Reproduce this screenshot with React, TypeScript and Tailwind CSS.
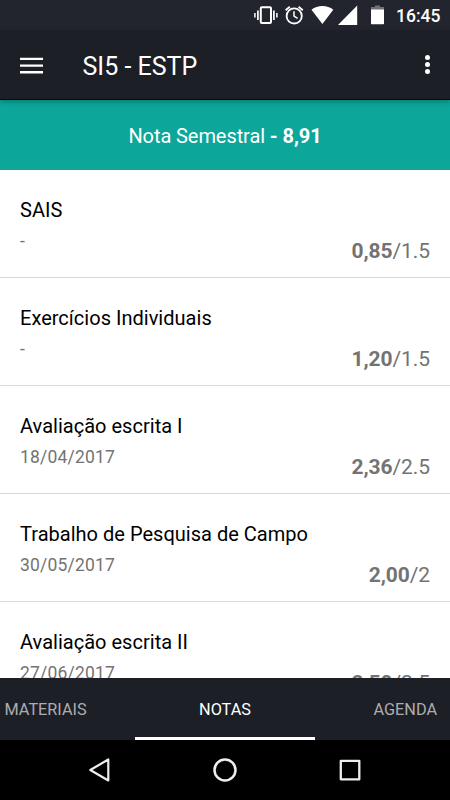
import { useState } from 'react'

interface Grade {
  title: string
  date: string
  score: string
  max: string
}

const grades: Grade[] = [
  { title: 'SAIS', date: '-', score: '0,85', max: '1.5' },
  { title: 'Exercícios Individuais', date: '-', score: '1,20', max: '1.5' },
  { title: 'Avaliação escrita I', date: '18/04/2017', score: '2,36', max: '2.5' },
  { title: 'Trabalho de Pesquisa de Campo', date: '30/05/2017', score: '2,00', max: '2' },
  { title: 'Avaliação escrita II', date: '27/06/2017', score: '2,50', max: '2.5' },
]

const tabs = [
  { label: 'MATERIAIS', className: 'justify-start pl-[4.5px]' },
  { label: 'NOTAS', className: 'justify-center' },
  { label: 'AGENDA', className: 'justify-end pr-[13px]' },
]

const StatusBar = () => (
  <div className="flex h-[30px] shrink-0 items-center bg-[#22252d] pl-[253px] text-white">
    <svg className="h-[20px] w-[25px]" viewBox="0 0 25 20" fill="none" stroke="currentColor">
      <rect x="7.8" y="2.2" width="10.2" height="15.8" rx="1" strokeWidth="2" />
      <path d="M4.9 5.5v9.5M20.9 5.5v9.5" strokeWidth="1.7" />
      <path d="M1.9 8v4.5M23.9 8v4.5" strokeWidth="1.5" />
    </svg>
    <svg className="ml-[6px] h-[20px] w-[20px]" viewBox="0 0 20 20" fill="none" stroke="currentColor">
      <circle cx="10.2" cy="10.9" r="7.6" strokeWidth="1.8" />
      <path d="M10 6.3v4.9l3.6 2.2" strokeWidth="1.5" />
      <path d="M1.6 5.3l4.2-3.6M18.8 5.3l-4.2-3.6" strokeWidth="1.8" />
    </svg>
    <svg className="ml-[7px] h-[20px] w-[23px]" viewBox="0 0 23 20" fill="currentColor">
      <path d="M.5 4.7C3.5 2.3 7.3 1 11.4 1s7.9 1.3 10.9 3.7L11.4 19z" />
    </svg>
    <svg className="ml-[4px] h-[20px] w-[20px]" viewBox="0 0 20 20" fill="currentColor">
      <path d="M0 20L19.2.6V20z" />
    </svg>
    <svg className="ml-[13px] h-[20px] w-[13px]" viewBox="0 0 13 20" fill="currentColor">
      <path d="M4 .5h5V2h4v3H0V2h4z" fillOpacity=".35" />
      <path d="M0 4.5h13v14a.7.7 0 0 1-.7.7H.7a.7.7 0 0 1-.7-.7z" />
    </svg>
    <span className="ml-[12px] pt-[1px] text-[17.5px] font-medium leading-[30px]">16:45</span>
  </div>
)

const AppBar = () => (
  <header className="relative z-10 flex h-[70px] shrink-0 items-center justify-between border-b border-[#08080c] bg-[#1c1f26] px-[20px] text-white shadow-[0_2px_5px_rgba(0,0,0,0.25)]">
    <div className="flex items-center">
      <button type="button" aria-label="Menu">
        <svg className="h-[18px] w-[23px]" viewBox="0 0 23 18" stroke="currentColor" strokeWidth="2.4">
          <path d="M0 2.9h23M0 9.6h23M0 16.3h23" />
        </svg>
      </button>
      <h1 className="ml-[39.5px] pt-[4px] text-[25px] leading-8">SI5 - ESTP</h1>
    </div>
    <button type="button" aria-label="Mais" className="flex flex-col gap-[2px]">
      <span className="size-[5px] rounded-full bg-white" />
      <span className="size-[5px] rounded-full bg-white" />
      <span className="size-[5px] rounded-full bg-white" />
    </button>
  </header>
)

const GradeRow = ({ grade }: { grade: Grade }) => (
  <li className="flex h-[108px] shrink-0 justify-between border-b border-[#d9d9d9] px-[20px] pb-[14px] pt-[28px]">
    <div className="flex flex-col gap-[7px]">
      <span className="text-[20px] leading-6 tracking-[0.02px] text-black">{grade.title}</span>
      <span className="text-[17.5px] leading-6 tracking-[0.2px] text-[#737373]">{grade.date}</span>
    </div>
    <span className="self-end text-[21px] leading-6 tracking-[-0.08px] text-[#737373]">
      <b>{grade.score}</b>
      /
      {grade.max}
    </span>
  </li>
)

const NavBar = () => (
  <div className="flex h-[60px] shrink-0 items-center justify-center gap-[101px] bg-black text-[#eee]">
    <svg className="size-[24px]" viewBox="0 0 24 24" fill="none" stroke="currentColor" strokeWidth="2.2" strokeLinejoin="round">
      <path d="M20.3 1.5v21L2.3 12z" />
    </svg>
    <svg className="size-[24px]" viewBox="0 0 24 24" fill="none" stroke="currentColor" strokeWidth="2.5">
      <circle cx="12" cy="12" r="10.5" />
    </svg>
    <svg className="size-[24px]" viewBox="0 0 24 24" fill="none" stroke="currentColor" strokeWidth="2.3" strokeLinejoin="round">
      <rect x="2.8" y="2.8" width="18.5" height="18.5" />
    </svg>
  </div>
)

export default function App() {
  const [active, setActive] = useState('NOTAS')

  return (
    <div className="flex h-[800px] w-[450px] flex-col overflow-hidden bg-white font-['Roboto',sans-serif]">
      <StatusBar />
      <AppBar />
      <div className="flex h-[70px] shrink-0 items-center justify-center bg-[#0ca69a] pt-[2px] text-[20px] tracking-[-0.08px] text-white">
        <span className="whitespace-pre">Nota Semestral </span>
        <b>- 8,91</b>
      </div>
      <ul className="flex min-h-0 flex-1 flex-col overflow-hidden">
        {grades.map(grade => <GradeRow key={grade.title} grade={grade} />)}
      </ul>
      <nav className="grid h-[62px] shrink-0 grid-cols-[135px_180px_135px] bg-[#1c1f26] text-[16.25px]">
        {tabs.map(tab => (
          <button
            key={tab.label}
            type="button"
            onClick={() => setActive(tab.label)}
            className={`flex items-center border-b-[3px] pt-[5px] ${tab.className} ${active === tab.label ? 'border-white text-white' : 'border-transparent text-[#adadaf]'}`}
          >
            {tab.label}
          </button>
        ))}
      </nav>
      <NavBar />
    </div>
  )
}
